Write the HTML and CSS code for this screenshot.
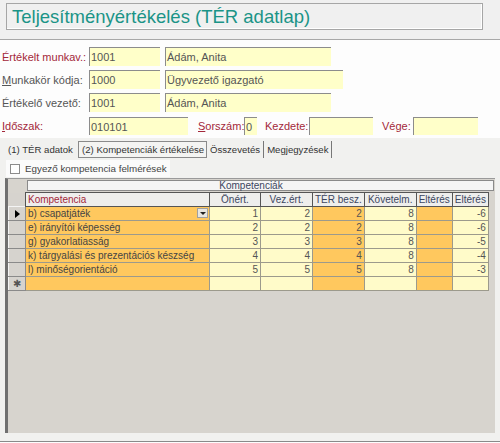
FILE: index.html
```html
<!DOCTYPE html>
<html lang="hu">
<head>
    <meta charset="UTF-8">
    <title>Teljesítményértékelés (TÉR adatlap)</title>
    <link rel="stylesheet" href="styles.css">
</head>
<body>
<div class="header">
    <div class="title-box">Teljesítményértékelés (TÉR adatlap)</div>
</div>

<div class="form">
    <div class="row">
        <span class="label red">Értékelt munkav.:</span>
        <span class="field w-code">1001</span>
        <span class="field w-name">Ádám, Anita</span>
    </div>
    <div class="row">
        <span class="label"><u>M</u>unkakör kódja:</span>
        <span class="field w-code">1000</span>
        <span class="field w-name-long">Ügyvezető igazgató</span>
    </div>
    <div class="row">
        <span class="label">Értékelő vezető:</span>
        <span class="field w-code">1001</span>
        <span class="field w-name">Ádám, Anita</span>
    </div>
    <div class="row">
        <span class="label red"><u>I</u>dőszak:</span>
        <span class="field w-period">010101</span>
        <span class="label-inline red sorszam"><u>S</u>orszám:</span>
        <span class="field w-num">0</span>
        <span class="label-inline red kezdete">Kezdete:</span>
        <span class="field w-date"></span>
        <span class="label-inline red vege">Vége:</span>
        <span class="field w-date2"></span>
    </div>
</div>

<div class="tabs-area">
    <div class="tabs">
        <span class="tab first">(1) TÉR adatok</span>
        <span class="tab active">(2) Kompetenciák értékelése</span>
        <span class="tab sep">Összevetés</span>
        <span class="tab sep">Megjegyzések</span>
    </div>
    <div class="panel">
        <div class="check-row">
            <span class="checkbox"></span>
            <span>Egyező kompetencia felmérések</span>
        </div>
        <div class="grid">
            <div class="group-head">Kompetenciák</div>
            <table class="datasheet">
                <tr class="head">
                    <td class="sel"></td>
                    <td class="left red">Kompetencia</td>
                    <td>Önért.</td>
                    <td>Vez.ért.</td>
                    <td>TÉR besz.</td>
                    <td>Követelm.</td>
                    <td>Eltérés</td>
                    <td>Eltérés</td>
                </tr>
                <tr>
                    <td class="sel"><span class="arrow"></span></td>
                    <td class="orange combo">b) csapatjáték<span class="drop"><span class="tri"></span></span></td>
                    <td class="pale">1</td>
                    <td class="pale">2</td>
                    <td class="orange">2</td>
                    <td class="pale">8</td>
                    <td class="orange"></td>
                    <td class="pale">-6</td>
                </tr>
                <tr>
                    <td class="sel"></td>
                    <td class="orange">e) irányítói képesség</td>
                    <td class="pale">2</td>
                    <td class="pale">2</td>
                    <td class="orange">2</td>
                    <td class="pale">8</td>
                    <td class="orange"></td>
                    <td class="pale">-6</td>
                </tr>
                <tr>
                    <td class="sel"></td>
                    <td class="orange">g) gyakorlatiasság</td>
                    <td class="pale">3</td>
                    <td class="pale">3</td>
                    <td class="orange">3</td>
                    <td class="pale">8</td>
                    <td class="orange"></td>
                    <td class="pale">-5</td>
                </tr>
                <tr>
                    <td class="sel"></td>
                    <td class="orange">k) tárgyalási és prezentációs készség</td>
                    <td class="pale">4</td>
                    <td class="pale">4</td>
                    <td class="orange">4</td>
                    <td class="pale">8</td>
                    <td class="orange"></td>
                    <td class="pale">-4</td>
                </tr>
                <tr>
                    <td class="sel"></td>
                    <td class="orange">l) minőségorientáció</td>
                    <td class="pale">5</td>
                    <td class="pale">5</td>
                    <td class="orange">5</td>
                    <td class="pale">8</td>
                    <td class="orange"></td>
                    <td class="pale">-3</td>
                </tr>
                <tr>
                    <td class="sel star">✱</td>
                    <td class="orange"></td>
                    <td class="pale"></td>
                    <td class="pale"></td>
                    <td class="orange"></td>
                    <td class="pale"></td>
                    <td class="orange"></td>
                    <td class="pale"></td>
                </tr>
            </table>
        </div>
    </div>
</div>
</body>
</html>
```

FILE: styles.css
```css
body {
    margin: 0;
    width: 500px;
    height: 443px;
    overflow: hidden;
    background: #fdfdfd;
    font-family: "Liberation Sans", Arial, sans-serif;
    font-size: 11px;
    color: #444;
}

/* title bar */
.header {
    height: 40px;
    background: #f0f0f0;
    border-bottom: 1px solid #a8a8a8;
    padding: 3px 0 0 6px;
    box-sizing: border-box;
}

.title-box {
    width: 477px;
    height: 27px;
    box-sizing: border-box;
    border: 1px solid #a6a6a6;
    box-shadow: inset -1px -1px 0 #fff;
    padding: 2px 0 0 5px;
    font-size: 18.5px;
    color: #1b9487;
}

/* form fields */
.form {
    box-sizing: border-box;
    padding: 7px 0 0 2px;
    height: 98px;
}

.row {
    display: flex;
    align-items: center;
    height: 19px;
    margin-bottom: 4px;
}

.label {
    width: 87px;
    color: #555;
}

.label-inline {
    color: #555;
}

.red {
    color: #a3283a;
}

.field {
    height: 19px;
    box-sizing: border-box;
    background: #ffffc9;
    border-top: 1px solid #8c8c8c;
    border-left: 1px solid #8c8c8c;
    padding: 3px 0 0 1px;
    color: #555;
}

.row:last-child .field {
    height: 18px;
}

.w-code { width: 71px; }
.w-name { width: 166px; margin-left: 5px; }
.w-name-long { width: 178px; margin-left: 5px; }
.w-period { width: 99px; }
.w-num { width: 13px; }
.w-date { width: 64px; }
.w-date2 { width: 65px; }

.sorszam { width: 46px; margin-left: 10px; }
.kezdete { width: 44px; margin-left: 8px; }
.vege { width: 31px; margin-left: 9px; }

/* tabs */
.tabs-area {
    background: #f1f1ef;
}

.tabs {
    display: flex;
    align-items: flex-end;
    height: 20px;
    padding: 0 0 0 8px;
    box-sizing: border-box;
    font-size: 9.6px;
}

.tab {
    height: 17px;
    box-sizing: border-box;
    padding: 3px 3px 0 3px;
    color: #333;
    white-space: nowrap;
}

.tab.first {
    width: 70px;
    padding-left: 0;
}

.tab.active {
    width: 129px;
    border: 1px solid #8a8a8a;
    background: #f4f4f2;
    padding-top: 2px;
}

.tab.sep {
    border-right: 1px solid #777;
}

.panel {
    box-sizing: border-box;
    height: 284px;
    padding: 2px 5px 0 5px;
    border-bottom: 1px solid #8a8a8a;
}

.check-row {
    display: flex;
    align-items: center;
    width: 164px;
    height: 17px;
    margin-left: 1px;
    background: #fbfbfb;
    color: #444;
    font-size: 9.8px;
    white-space: nowrap;
}

.checkbox {
    flex-shrink: 0;
    width: 8px;
    height: 8px;
    border: 1px solid #8c8c8c;
    background: #fff;
    margin: 0 5px 0 4px;
}

/* datasheet */
.grid {
    box-sizing: border-box;
    height: 255px;
    margin-top: 1px;
    background: #d7d4ce;
    border-left: 3px solid #707070;
    border-top: 1px solid #9a9a9a;
    padding: 1px 0 0 0;
}

.group-head {
    margin-left: 19px;
    width: 467px;
    height: 11px;
    box-sizing: border-box;
    background: #f5f5f5;
    border: 1px solid #8a8a8a;
    padding-right: 19px;
    text-align: center;
    font-size: 10px;
    line-height: 9px;
    color: #3c4660;
}

.datasheet {
    border-collapse: collapse;
    margin-top: 1px;
    table-layout: fixed;
    font-size: 10px;
}

.datasheet td {
    height: 13px;
    padding: 0 2px;
    line-height: 11px;
    border: 1px solid #9c9a8c;
    text-align: right;
    color: #555;
    overflow: hidden;
    white-space: nowrap;
}

.datasheet td:nth-child(1) { width: 16px; }
.datasheet td:nth-child(2) { width: 179px; }
.datasheet td:nth-child(3) { width: 46px; }
.datasheet td:nth-child(4) { width: 47px; }
.datasheet td:nth-child(5) { width: 46px; }
.datasheet td:nth-child(6) { width: 47px; }
.datasheet td:nth-child(7) { width: 29px; }
.datasheet td:nth-child(8) { width: 25px; }

.datasheet .head td {
    background: #eeeeec;
    border: 1px solid #555;
    text-align: center;
    color: #3c4660;
}

.datasheet .head td.left {
    text-align: left;
    color: #a3283a;
}

.datasheet td.sel {
    background: #d6d3ce;
    border-color: #f4f4f4 #8a8a8a #8a8a8a #f4f4f4;
    text-align: center;
    padding: 0;
}

.datasheet .head td.sel {
    background: #d6d3ce;
    border: none;
}

.datasheet td.orange {
    background: #ffc85e;
}

.datasheet td.pale {
    background: #fffbc9;
}

.datasheet td:nth-child(2) {
    text-align: left;
    color: #444;
}

.combo {
    position: relative;
}

.drop {
    position: absolute;
    right: 1px;
    top: 1px;
    width: 11px;
    height: 10px;
    background: #e8e6e0;
    border: 1px solid #a0a0a0;
    box-sizing: border-box;
    display: flex;
    align-items: center;
    justify-content: center;
}

.tri {
    width: 0;
    height: 0;
    border-left: 3px solid transparent;
    border-right: 3px solid transparent;
    border-top: 3px solid #222;
}

.arrow {
    display: inline-block;
    width: 0;
    height: 0;
    border-top: 4px solid transparent;
    border-bottom: 4px solid transparent;
    border-left: 5px solid #000;
    vertical-align: middle;
}

.star {
    font-size: 10px;
    color: #333;
}
```
